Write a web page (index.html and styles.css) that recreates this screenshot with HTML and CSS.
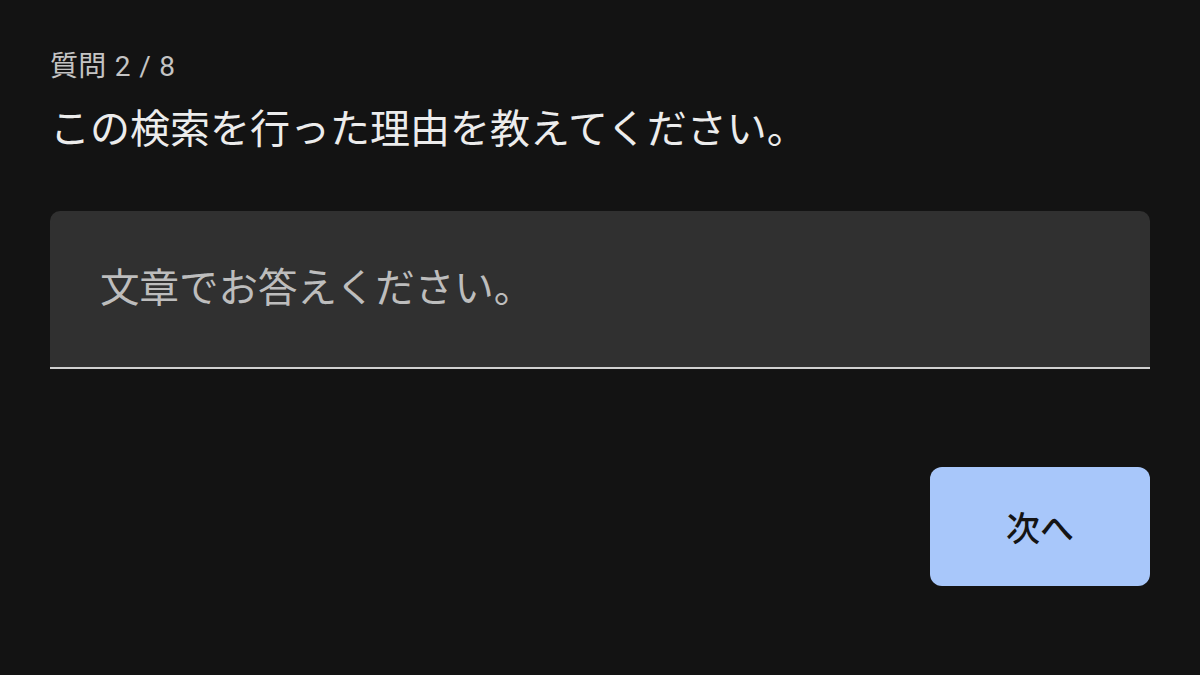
FILE: index.html
```html
<!DOCTYPE html>
<html lang="ja">
<head>
    <meta charset="UTF-8">
    <meta name="viewport" content="width=device-width, initial-scale=1.0">
    <title>アンケート</title>
    <link rel="stylesheet" href="styles.css">
</head>
<body>
    <div class="survey">
        <div class="progress">質問 2 / 8</div>
        <h1 class="question">この検索を行った理由を教えてください。</h1>
        <div class="answer-field">
            <textarea class="answer-input" placeholder="文章でお答えください。"></textarea>
        </div>
        <div class="actions">
            <button class="btn-next">次へ</button>
        </div>
    </div>
</body>
</html>
```

FILE: styles.css
```css
body {
    margin: 0;
    padding: 0;
    background-color: #131313;
    font-family: Roboto, "Noto Sans CJK JP", sans-serif;
    color: #e6e6e6;
}
.survey {
    display: flex;
    flex-direction: column;
    padding: 49px 50px 0 50px;
}
.progress {
    font-size: 28px;
    line-height: 36px;
    letter-spacing: 0.3px;
    word-spacing: 1px;
    color: #c4c4c4;
}
.question {
    margin: 20px 0 0 0;
    font-size: 40px;
    line-height: 50px;
    font-weight: normal;
    color: #ececec;
}
.answer-field {
    margin-top: 56px;
    height: 156px;
    background: #303030;
    border-radius: 10px 10px 0 0;
    border-bottom: 2px solid #d0d0d0;
    display: flex;
    align-items: center;
    padding: 0 50px;
}
.answer-input {
    flex: 1;
    height: 50px;
    background: transparent;
    border: none;
    outline: none;
    resize: none;
    padding: 0;
    font-family: Roboto, "Noto Sans CJK JP", sans-serif;
    font-size: 39.5px;
    line-height: 50px;
    color: #e6e6e6;
    overflow: hidden;
}
.answer-input::placeholder {
    color: #bdbdbd;
}
.actions {
    display: flex;
    justify-content: flex-end;
    margin-top: 98px;
}
.btn-next {
    width: 220px;
    height: 119px;
    border: none;
    border-radius: 12px;
    background: #a8c7fa;
    color: #141414;
    font-family: Roboto, "Noto Sans CJK JP", sans-serif;
    font-size: 34px;
    font-weight: 500;
    cursor: pointer;
}
```
